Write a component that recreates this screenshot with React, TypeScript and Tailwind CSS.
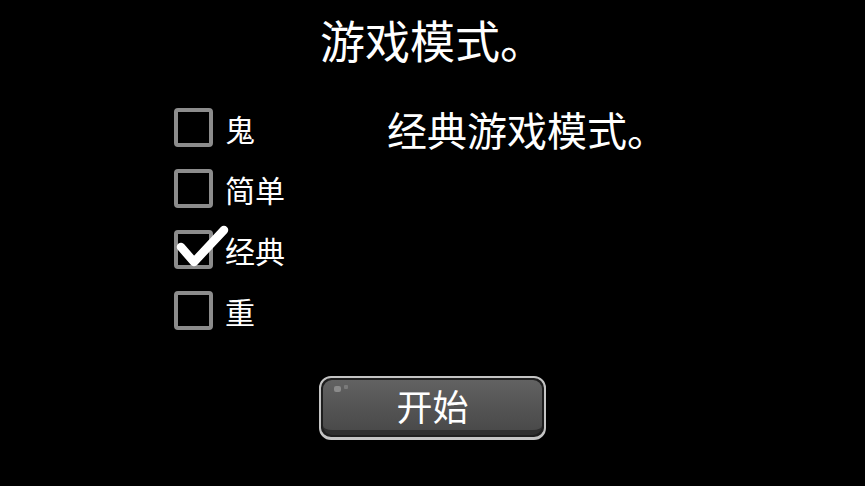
import React from "react";

const options = [
  { label: "鬼", checked: false },
  { label: "简单", checked: false },
  { label: "经典", checked: true },
  { label: "重", checked: false },
];

function CheckBox({ checked }: { checked: boolean }) {
  return (
    <div className="relative h-[39px] w-[39px] shrink-0 rounded-[4px] border-[4px] border-[#8c8c8c] bg-black">
      {checked && (
        <svg
          className="absolute left-[-4px] top-[-14px] overflow-visible"
          width="60"
          height="50"
          viewBox="0 0 60 50"
        >
          <path
            d="M7 27 L20 42 L50 10"
            fill="none"
            stroke="#ffffff"
            strokeWidth="8.5"
            strokeLinecap="round"
            strokeLinejoin="round"
          />
        </svg>
      )}
    </div>
  );
}

export default function App() {
  return (
    <div
      className="flex h-[486px] w-[865px] flex-col items-center bg-black text-white"
      style={{ fontFamily: '"Noto Sans CJK SC", "Noto Sans", sans-serif' }}
    >
      <h1 className="mt-[12px] text-[45px] leading-[56px] font-normal">游戏模式。</h1>

      <div className="mt-[40px] flex w-full">
        <div className="ml-[174px] flex flex-col gap-[22px]">
          {options.map((o) => (
            <div key={o.label} className="flex h-[39px] items-center gap-[12px]">
              <CheckBox checked={o.checked} />
              <span className="text-[30px] leading-none font-normal">{o.label}</span>
            </div>
          ))}
        </div>
        <div className="ml-[102px] mt-[-3px] text-[40px] leading-[48px] font-normal">经典游戏模式。</div>
      </div>

      <button className="relative mt-[46px] h-[64px] w-[227px] rounded-[12px] border-[2px] border-b-[3px] border-[#c4c4c4] bg-[#1e1e1e] p-[2px]">
        <div className="flex h-full w-full items-center justify-center rounded-[9px] border-b-[5px] border-[#2e2e2e] bg-gradient-to-b from-[#626262] via-[#555555] to-[#4a4a4a]">
          <span className="text-[36px] leading-none font-normal text-white">开始</span>
        </div>
        <span className="absolute left-[13px] top-[8px] h-[6px] w-[7px] rounded-[2px] bg-[#8a8a8a]" />
        <span className="absolute left-[23px] top-[7px] h-[4px] w-[4px] rounded-[1px] bg-[#7a7a7a]" />
      </button>
    </div>
  );
}
